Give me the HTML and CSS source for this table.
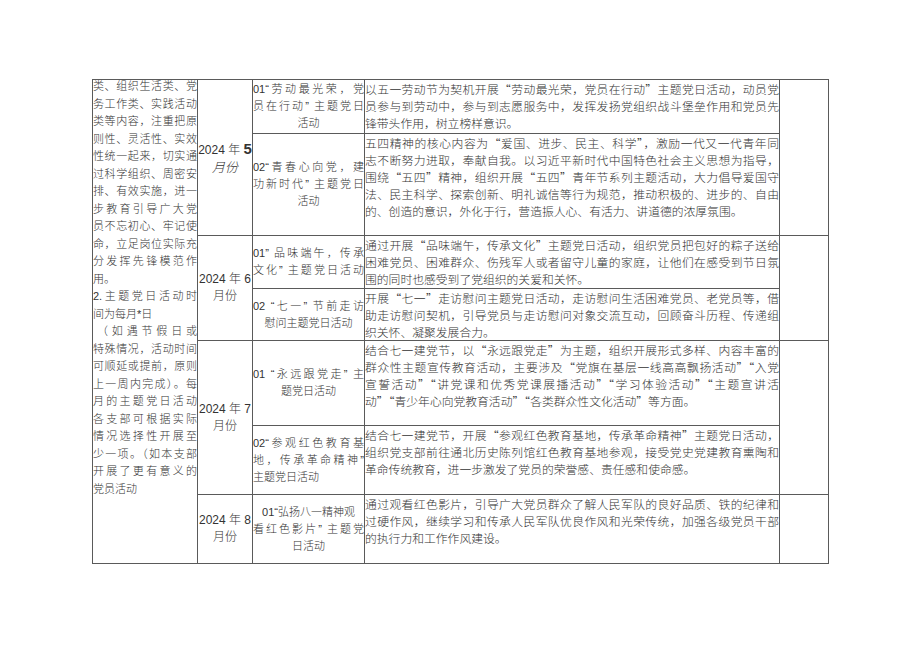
FILE: index.html
```html
<!DOCTYPE html>
<html lang="zh-CN">
<head>
<meta charset="utf-8">
<title>主题党日活动计划</title>
<link rel="stylesheet" href="styles.css">
</head>
<body>
<div class="page">
<table class="plan">
  <colgroup>
    <col class="c1"><col class="c2"><col class="c3"><col class="c4"><col class="c5">
  </colgroup>
  <tr class="r1">
    <td rowspan="7" class="notes">
      <div class="notes-in">
        <span class="ln">类、组织生活类、党</span>
        <span class="ln">务工作类、实践活动</span>
        <span class="ln">类等内容，注重把原</span>
        <span class="ln">则性、灵活性、实效</span>
        <span class="ln">性统一起来，切实通</span>
        <span class="ln">过科学组织、周密安</span>
        <span class="ln">排、有效实施，进一</span>
        <span class="ln">步教育引导广大党</span>
        <span class="ln">员不忘初心、牢记使</span>
        <span class="ln">命，立足岗位实际充</span>
        <span class="ln">分发挥先锋模范作</span>
        <span class="ln end">用。</span>
        <span class="ln">2.主题党日活动时</span>
        <span class="ln end">间为每月*日</span>
        <span class="ln indent">（如遇节假日或</span>
        <span class="ln">特殊情况，活动时间</span>
        <span class="ln">可顺延或提前，原则</span>
        <span class="ln">上一周内完成）。每</span>
        <span class="ln">月的主题党日活动</span>
        <span class="ln">各支部可根据实际</span>
        <span class="ln">情况选择性开展至</span>
        <span class="ln">少一项。（如本支部</span>
        <span class="ln">开展了更有意义的</span>
        <span class="ln end">党员活动</span>
      </div>
    </td>
    <td rowspan="2" class="month"><span class="mline">2024 年 <span class="big">5</span></span><span class="mline ital">月份</span></td>
    <td class="topic">
      <span class="tl">01“劳动最光荣，党</span>
      <span class="tl">员在行动” 主题党日</span>
      <span class="tl c">活动</span>
    </td>
    <td class="content">
      <span class="ln">以五一劳动节为契机开展“劳动最光荣，党员在行动”主题党日活动，动员党</span>
      <span class="ln">员参与到劳动中，参与到志愿服务中，发挥发扬党组织战斗堡垒作用和党员先</span>
      <span class="ln end">锋带头作用，树立榜样意识。</span>
    </td>
    <td rowspan="2" class="blank"></td>
  </tr>
  <tr class="r2">
    <td class="topic">
      <span class="tl">02“青春心向党，建</span>
      <span class="tl">功新时代” 主题党日</span>
      <span class="tl c">活动</span>
    </td>
    <td class="content">
      <span class="ln">五四精神的核心内容为“爱国、进步、民主、科学”，激励一代又一代青年同</span>
      <span class="ln">志不断努力进取，奉献自我。以习近平新时代中国特色社会主义思想为指导，</span>
      <span class="ln">围绕“五四”精神，组织开展“五四”青年节系列主题活动，大力倡导爱国守</span>
      <span class="ln">法、民主科学、探索创新、明礼诚信等行为规范，推动积极的、进步的、自由</span>
      <span class="ln end">的、创造的意识，外化于行，营造振人心、有活力、讲道德的浓厚氛围。</span>
    </td>
  </tr>
  <tr class="r3">
    <td rowspan="2" class="month"><span class="mline">2024 年 6</span><span class="mline">月份</span></td>
    <td class="topic">
      <span class="tl">01” 品味端午，传承</span>
      <span class="tl">文化” 主题党日活动</span>
    </td>
    <td class="content">
      <span class="ln">通过开展“品味端午，传承文化”主题党日活动，组织党员把包好的粽子送给</span>
      <span class="ln">困难党员、困难群众、伤残军人或者留守儿童的家庭，让他们在感受到节日氛</span>
      <span class="ln end">围的同时也感受到了党组织的关爱和关怀。</span>
    </td>
    <td rowspan="2" class="blank"></td>
  </tr>
  <tr class="r4">
    <td class="topic">
      <span class="tl">02 “七一” 节前走访</span>
      <span class="tl c">慰问主题党日活动</span>
    </td>
    <td class="content">
      <span class="ln">开展“七一”走访慰问主题党日活动，走访慰问生活困难党员、老党员等，借</span>
      <span class="ln">助走访慰问契机，引导党员与走访慰问对象交流互动，回顾奋斗历程、传递组</span>
      <span class="ln end">织关怀、凝聚发展合力。</span>
    </td>
  </tr>
  <tr class="r5">
    <td rowspan="2" class="month"><span class="mline">2024 年 7</span><span class="mline">月份</span></td>
    <td class="topic">
      <span class="tl">01 “永远跟党走” 主</span>
      <span class="tl c">题党日活动</span>
    </td>
    <td class="content">
      <span class="ln">结合七一建党节，以“永远跟党走”为主题，组织开展形式多样、内容丰富的</span>
      <span class="ln">群众性主题宣传教育活动，主要涉及“党旗在基层一线高高飘扬活动”“入党</span>
      <span class="ln">宣誓活动”“讲党课和优秀党课展播活动”“学习体验活动”“主题宣讲活</span>
      <span class="ln end">动”“青少年心向党教育活动”“各类群众性文化活动”等方面。</span>
    </td>
    <td rowspan="2" class="blank"></td>
  </tr>
  <tr class="r6">
    <td class="topic">
      <span class="tl">02“参观红色教育基</span>
      <span class="tl">地，传承革命精神”</span>
      <span class="tl l">主题党日活动</span>
    </td>
    <td class="content">
      <span class="ln">结合七一建党节，开展“参观红色教育基地，传承革命精神”主题党日活动，</span>
      <span class="ln">组织党支部前往通北历史陈列馆红色教育基地参观，接受党史党建教育熏陶和</span>
      <span class="ln end">革命传统教育，进一步激发了党员的荣誉感、责任感和使命感。</span>
    </td>
  </tr>
  <tr class="r7">
    <td class="month"><span class="mline">2024 年 8</span><span class="mline">月份</span></td>
    <td class="topic">
      <span class="tl c">01“弘扬八一精神观</span>
      <span class="tl">看红色影片” 主题党</span>
      <span class="tl c">日活动</span>
    </td>
    <td class="content">
      <span class="ln">通过观看红色影片，引导广大党员群众了解人民军队的良好品质、铁的纪律和</span>
      <span class="ln">过硬作风，继续学习和传承人民军队优良作风和光荣传统，加强各级党员干部</span>
      <span class="ln end">的执行力和工作作风建设。</span>
    </td>
    <td class="blank"></td>
  </tr>
</table>
</div>
</body>
</html>
```

FILE: styles.css
```css
html, body {
  margin: 0;
  padding: 0;
  background: #ffffff;
}

body {
  font-family: "Liberation Sans", "Noto Sans CJK SC", sans-serif;
  font-weight: 300;
  color: #333333;
}

.page {
  padding: 79px 0 0 92px;
}

.plan {
  border-collapse: collapse;
  table-layout: fixed;
  width: 737px;
}

.c1 { width: 105px; }
.c2 { width: 55px; }
.c3 { width: 112px; }
.c4 { width: 415px; }
.c5 { width: 49px; }

.plan td {
  border: 1px solid #5a5a5a;
  padding: 0;
}

.r1 { height: 54px; }
.r2 { height: 102px; }
.r3 { height: 53px; }
.r4 { height: 52px; }
.r5 { height: 85px; }
.r6 { height: 69px; }
.r7 { height: 69px; }

.ln, .tl {
  display: block;
  text-align: justify;
  text-align-last: justify;
}

.ln.end {
  text-align-last: left;
}

.notes {
  vertical-align: top;
  font-size: 11px;
  line-height: 17.5px;
  padding: 0 2px 0 1px;
}

.notes-in {
  margin-top: -2px;
}

.ln.indent {
  padding-left: 4px;
}

.month {
  vertical-align: middle;
  text-align: center;
  font-size: 12px;
  line-height: 17px;
}

.mline {
  display: block;
  white-space: nowrap;
  margin: 0 -2px;
}

.big {
  font-size: 15px;
  font-weight: bold;
}

.ital {
  font-style: italic;
  font-size: 13px;
}

.topic {
  vertical-align: middle;
  font-size: 11px;
  line-height: 17px;
  padding: 0 2px 0 3px;
}

.tl.c { text-align-last: center; }
.tl.l { text-align-last: left; }

.content {
  vertical-align: top;
  font-family: "Noto Sans CJK SC", sans-serif;
  font-size: 11.8px;
  line-height: 17px;
  padding: 1px 4px 0 2px;
}

.blank {
  background: #ffffff;
}
```
